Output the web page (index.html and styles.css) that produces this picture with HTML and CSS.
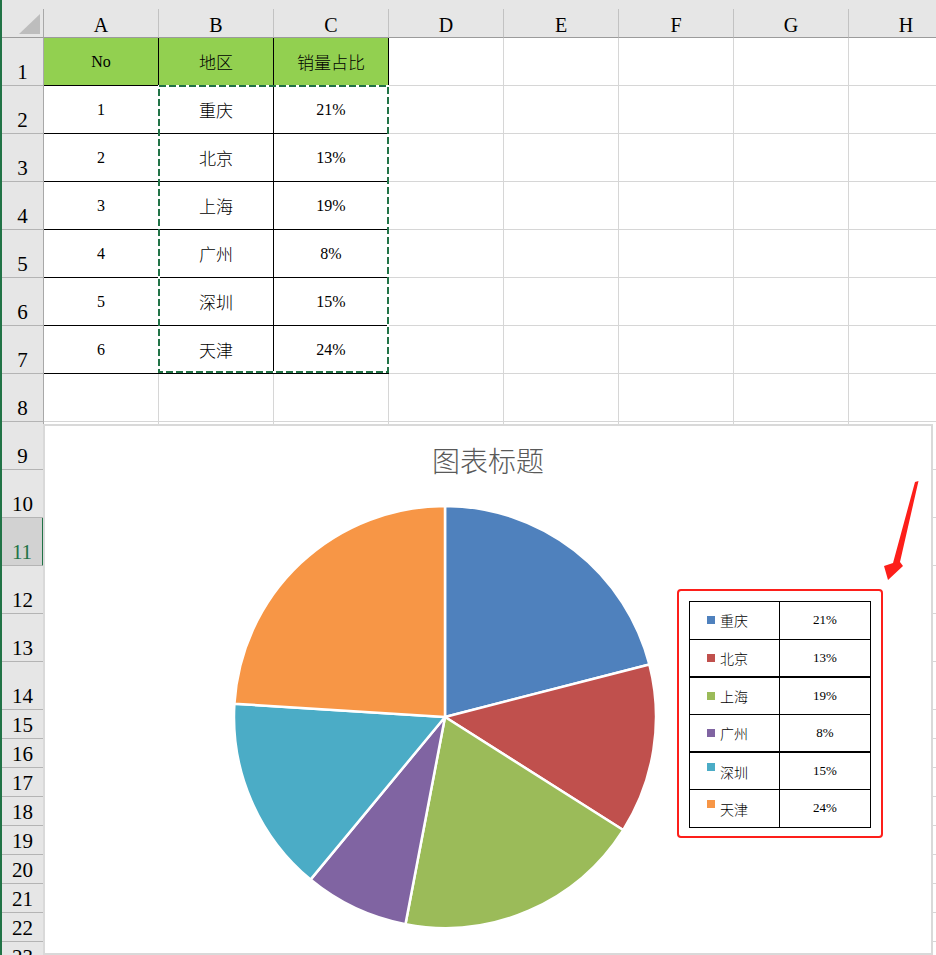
FILE: index.html
```html
<!DOCTYPE html>
<html lang="zh-CN">
<head>
    <meta charset="UTF-8">
    <meta name="viewport" content="width=device-width, initial-scale=1.0">
    <title>销量占比</title>
    <link rel="stylesheet" href="styles.css">
</head>
<body>
    <div class="window">
        <div class="strip"></div>

        <div class="row head">
            <div class="corner"></div>
            <div class="ch">A</div>
            <div class="ch">B</div>
            <div class="ch">C</div>
            <div class="ch">D</div>
            <div class="ch">E</div>
            <div class="ch">F</div>
            <div class="ch">G</div>
            <div class="ch">H</div>
        </div>

        <div class="row r48">
            <div class="rh">1</div>
            <div class="c t fill">No</div>
            <div class="c t fill zh">地区</div>
            <div class="c t fill zh">销量占比</div>
        </div>
        <div class="row r48">
            <div class="rh">2</div>
            <div class="c t">1</div>
            <div class="c t zh">重庆</div>
            <div class="c t">21%</div>
        </div>
        <div class="row r48">
            <div class="rh">3</div>
            <div class="c t">2</div>
            <div class="c t zh">北京</div>
            <div class="c t">13%</div>
        </div>
        <div class="row r48">
            <div class="rh">4</div>
            <div class="c t">3</div>
            <div class="c t zh">上海</div>
            <div class="c t">19%</div>
        </div>
        <div class="row r48">
            <div class="rh">5</div>
            <div class="c t">4</div>
            <div class="c t zh">广州</div>
            <div class="c t">8%</div>
        </div>
        <div class="row r48">
            <div class="rh">6</div>
            <div class="c t">5</div>
            <div class="c t zh">深圳</div>
            <div class="c t">15%</div>
        </div>
        <div class="row r48">
            <div class="rh">7</div>
            <div class="c t">6</div>
            <div class="c t zh">天津</div>
            <div class="c t">24%</div>
        </div>
        <div class="row r48"><div class="rh">8</div></div>
        <div class="row r48"><div class="rh">9</div></div>
        <div class="row r48"><div class="rh">10</div></div>
        <div class="row r48"><div class="rh sel">11</div></div>
        <div class="row r48"><div class="rh">12</div></div>
        <div class="row r48"><div class="rh">13</div></div>
        <div class="row r48"><div class="rh">14</div></div>
        <div class="row r29"><div class="rh">15</div></div>
        <div class="row r29"><div class="rh">16</div></div>
        <div class="row r29"><div class="rh">17</div></div>
        <div class="row r29"><div class="rh">18</div></div>
        <div class="row r29"><div class="rh">19</div></div>
        <div class="row r29"><div class="rh">20</div></div>
        <div class="row r29"><div class="rh">21</div></div>
        <div class="row r29"><div class="rh">22</div></div>
        <div class="row r29"><div class="rh">23</div></div>

        <!-- copy marquee around B2:C7 -->
        <svg class="marquee" width="400" height="380" viewBox="0 0 400 380">
            <rect x="159" y="86" width="229" height="286" fill="none" stroke="#fff" stroke-width="2"/>
            <rect x="159" y="86" width="229" height="286" fill="none" stroke="#217346" stroke-width="2" stroke-dasharray="7 3"/>
        </svg>

        <div class="chart">
            <div class="chart-title">图表标题</div>
            <svg class="plot" width="886" height="527" viewBox="45 426 886 527">
                <g class="slices">
                    <path fill="#4f81bd" d="M445,717 L445,506 A211,211 0 0 1 649.37,664.53 Z"/>
                    <path fill="#c0504d" d="M445,717 L649.37,664.53 A211,211 0 0 1 623.15,830.06 Z"/>
                    <path fill="#9bbb59" d="M445,717 L623.15,830.06 A211,211 0 0 1 405.46,924.26 Z"/>
                    <path fill="#8064a2" d="M445,717 L405.46,924.26 A211,211 0 0 1 310.50,879.58 Z"/>
                    <path fill="#4bacc6" d="M445,717 L310.50,879.58 A211,211 0 0 1 234.42,703.75 Z"/>
                    <path fill="#f79646" d="M445,717 L234.42,703.75 A211,211 0 0 1 445,506 Z"/>
                </g>
                <polygon fill="#fd1f1a" points="915,482 918.5,481 900,562 903,566 888,580 884,566 893,563"/>
            </svg>

            <div class="legend">
                <table>
                    <tr>
                        <td class="name"><div class="key"><i class="sw cq"></i><span>重庆</span></div></td>
                        <td class="pct">21%</td>
                    </tr>
                    <tr>
                        <td class="name"><div class="key"><i class="sw bj"></i><span>北京</span></div></td>
                        <td class="pct">13%</td>
                    </tr>
                    <tr class="thick">
                        <td class="name"><div class="key"><i class="sw sh"></i><span>上海</span></div></td>
                        <td class="pct">19%</td>
                    </tr>
                    <tr>
                        <td class="name"><div class="key"><i class="sw gz"></i><span>广州</span></div></td>
                        <td class="pct">8%</td>
                    </tr>
                    <tr class="thick">
                        <td class="name"><div class="key up"><i class="sw sz"></i><span>深圳</span></div></td>
                        <td class="pct">15%</td>
                    </tr>
                    <tr>
                        <td class="name"><div class="key up"><i class="sw tj"></i><span>天津</span></div></td>
                        <td class="pct">24%</td>
                    </tr>
                </table>
            </div>
        </div>
    </div>

    <script>
        // fill every sheet row up to column H with empty cells
        document.querySelectorAll('.row').forEach(row => {
            while (row.children.length < 9) {
                const cell = document.createElement('div');
                cell.className = 'c';
                row.appendChild(cell);
            }
        });
    </script>
</body>
</html>
```

FILE: styles.css
```css
* {
    box-sizing: border-box;
}

body {
    margin: 0;
    background: #fff;
    color: #000;
    overflow: hidden;
    font-family: "Liberation Serif", "Noto Sans CJK SC", serif;
}

.window {
    position: relative;
    width: 936px;
    height: 955px;
    overflow: hidden;
    border-left: 2px solid #217346;
}

.strip {
    height: 9px;
    background: #e6e6e6;
}

.row {
    display: grid;
    grid-template-columns: 42px repeat(8, 115px);
}

.head {
    height: 29px;
}

.r48 {
    height: 48px;
}

.r29 {
    height: 29px;
}

/* headers */
.corner {
    position: relative;
    background: #e6e6e6;
    border-right: 1px solid #a8a8a8;
    border-bottom: 1px solid #9b9b9b;
}

.corner::after {
    content: "";
    position: absolute;
    right: 3px;
    bottom: 3px;
    width: 21px;
    height: 20px;
    background: #bdbdbd;
    clip-path: polygon(100% 0, 100% 100%, 0 100%);
}

.ch {
    display: flex;
    align-items: flex-end;
    justify-content: center;
    padding-bottom: 2px;
    background: #e6e6e6;
    border-right: 1px solid #c2c2c2;
    border-bottom: 1px solid #9b9b9b;
    font-size: 20px;
    line-height: 1;
}

.rh {
    display: flex;
    align-items: flex-end;
    justify-content: center;
    padding-bottom: 2px;
    background: #e6e6e6;
    border-right: 1px solid #a8a8a8;
    border-bottom: 1px solid #b4b4b4;
    font-size: 21px;
    line-height: 1;
}

.rh.sel {
    background: #d2d2d2;
    color: #217346;
    border-right: 2px solid #217346;
}

/* cells */
.c {
    display: flex;
    align-items: center;
    justify-content: center;
    border-right: 1px solid #d6d6d6;
    border-bottom: 1px solid #d6d6d6;
    font-size: 16px;
}

.c.zh {
    font-size: 17px;
    font-weight: 300;
}

.c.t {
    border-color: #000;
}

.fill {
    background: #92d050;
}

.marquee {
    position: absolute;
    top: 0;
    left: -2px;
    pointer-events: none;
}

/* chart */
.chart {
    position: absolute;
    left: 41px;
    top: 424px;
    width: 890px;
    height: 531px;
    border: 2px solid #d9d9d9;
    background: #fff;
}

.chart-title {
    margin-top: 16px;
    text-align: center;
    font-family: "Noto Sans CJK SC", sans-serif;
    font-size: 28px;
    font-weight: 300;
    line-height: 36px;
    color: #595959;
}

.plot {
    position: absolute;
    top: 0;
    left: 0;
}

.slices path {
    stroke: #fff;
    stroke-width: 2.5;
    stroke-linejoin: round;
}

.legend {
    position: absolute;
    left: 632px;
    top: 163px;
    width: 206px;
    height: 249px;
    padding: 10px;
    border: 2px solid #fd1f1a;
    border-radius: 4px;
    background: #fff;
}

.legend table {
    border-collapse: collapse;
    width: 182px;
}

.legend td {
    height: 37.6px;
    padding: 0;
    border: 1px solid #000;
}

.legend tr.thick td {
    border-top: 2px solid #000;
}

.legend .name {
    width: 90px;
    padding-left: 17px;
}

.legend .pct {
    text-align: center;
    font-size: 13px;
}

.key {
    display: flex;
    align-items: center;
    gap: 5px;
    font-family: "Noto Sans CJK SC", sans-serif;
    font-size: 14px;
    font-weight: 300;
    line-height: 20px;
}

.key.up {
    align-items: flex-start;
    padding-top: 2px;
}

.key.up .sw {
    margin-top: 1px;
}

.sw {
    display: block;
    width: 8px;
    height: 8px;
}

.sw.cq { background: #4f81bd; }
.sw.bj { background: #c0504d; }
.sw.sh { background: #9bbb59; }
.sw.gz { background: #8064a2; }
.sw.sz { background: #4bacc6; }
.sw.tj { background: #f79646; }
```
